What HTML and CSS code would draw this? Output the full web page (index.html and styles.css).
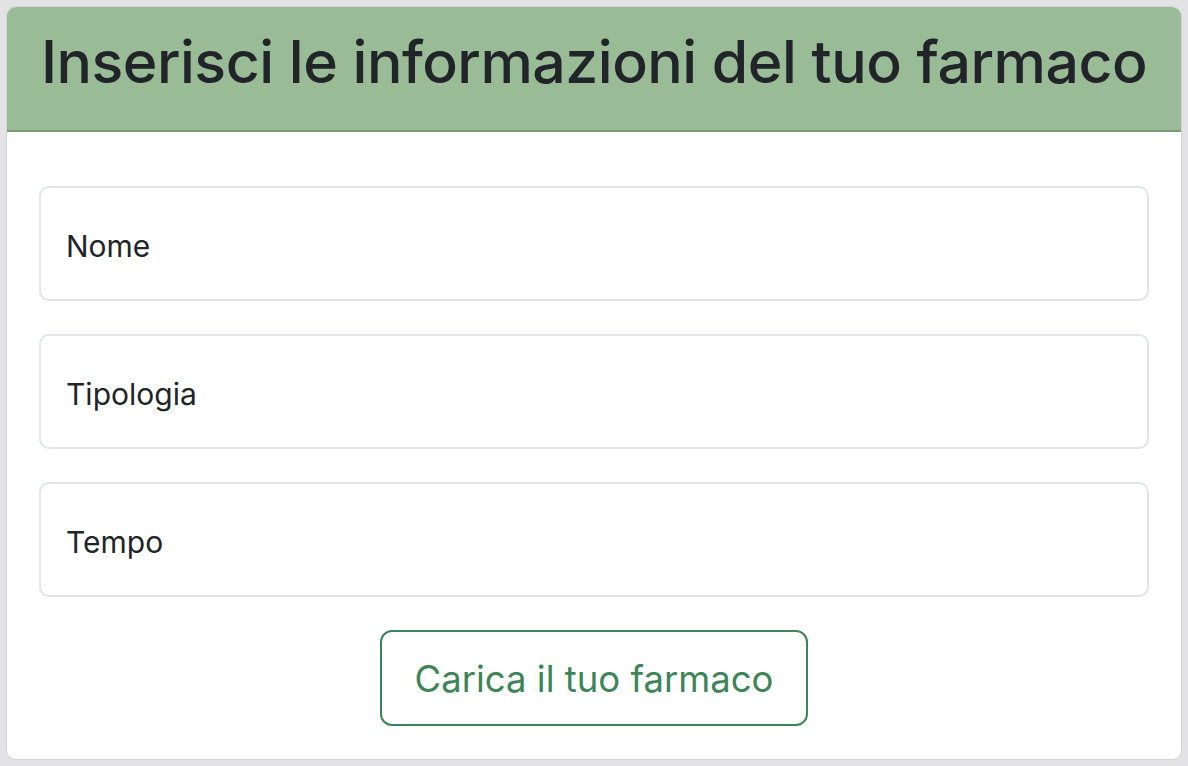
FILE: index.html
```html
<!DOCTYPE html>
<html lang="it">
<head>
<meta charset="utf-8">
<title>Farmaco</title>
<link rel="stylesheet" href="styles.css">
</head>
<body>
<div class="card">
  <div class="card-header">
    <h1 class="title">Inserisci le informazioni del tuo farmaco</h1>
  </div>
  <form class="card-body">
    <div class="field">Nome</div>
    <div class="field">Tipologia</div>
    <div class="field">Tempo</div>
    <div class="actions">
      <button type="button" class="btn">Carica il tuo farmaco</button>
    </div>
  </form>
</div>
</body>
</html>
```

FILE: styles.css
```css
* { box-sizing: border-box; }
html, body { margin: 0; padding: 0; }
body {
  background: #e3e3e6;
  font-family: Inter, "Noto Sans", "Liberation Sans", sans-serif;
  color: #212529;
  padding: 6px 6px 0 6px;
  height: 766px;
  overflow: hidden;
}
.card {
  background: #fff;
  border: 1px solid #d4d4d8;
  border-radius: 10px;
  overflow: hidden;
  width: 1176px;
  height: 754px;
  display: flex;
  flex-direction: column;
}
.card-header {
  background: #99bb96;
  border-bottom: 2px solid #7a9a78;
  height: 125px;
  padding-bottom: 14px;
  display: flex;
  align-items: center;
  justify-content: center;
}
.title {
  margin: 0;
  font-size: 59px;
  font-weight: 500;
  letter-spacing: -0.5px;
  color: #212529;
}
.card-body {
  margin: 0;
  padding: 54px 32px 0 32px;
  display: flex;
  flex-direction: column;
  gap: 33px;
}
.field {
  height: 115px;
  border: 2px solid #e2e4e7;
  border-radius: 10px;
  display: flex;
  align-items: center;
  padding: 5px 25px 0 25px;
  font-size: 30px;
  color: #212529;
}
.actions {
  display: flex;
  justify-content: center;
  margin-top: 0;
}
.btn {
  font-family: inherit;
  width: 428px;
  height: 96px;
  padding-top: 3px;
  background: #fff;
  border: 2px solid #3e8459;
  border-radius: 12px;
  color: #3e8459;
  font-size: 36.5px;
  cursor: pointer;
}
```
